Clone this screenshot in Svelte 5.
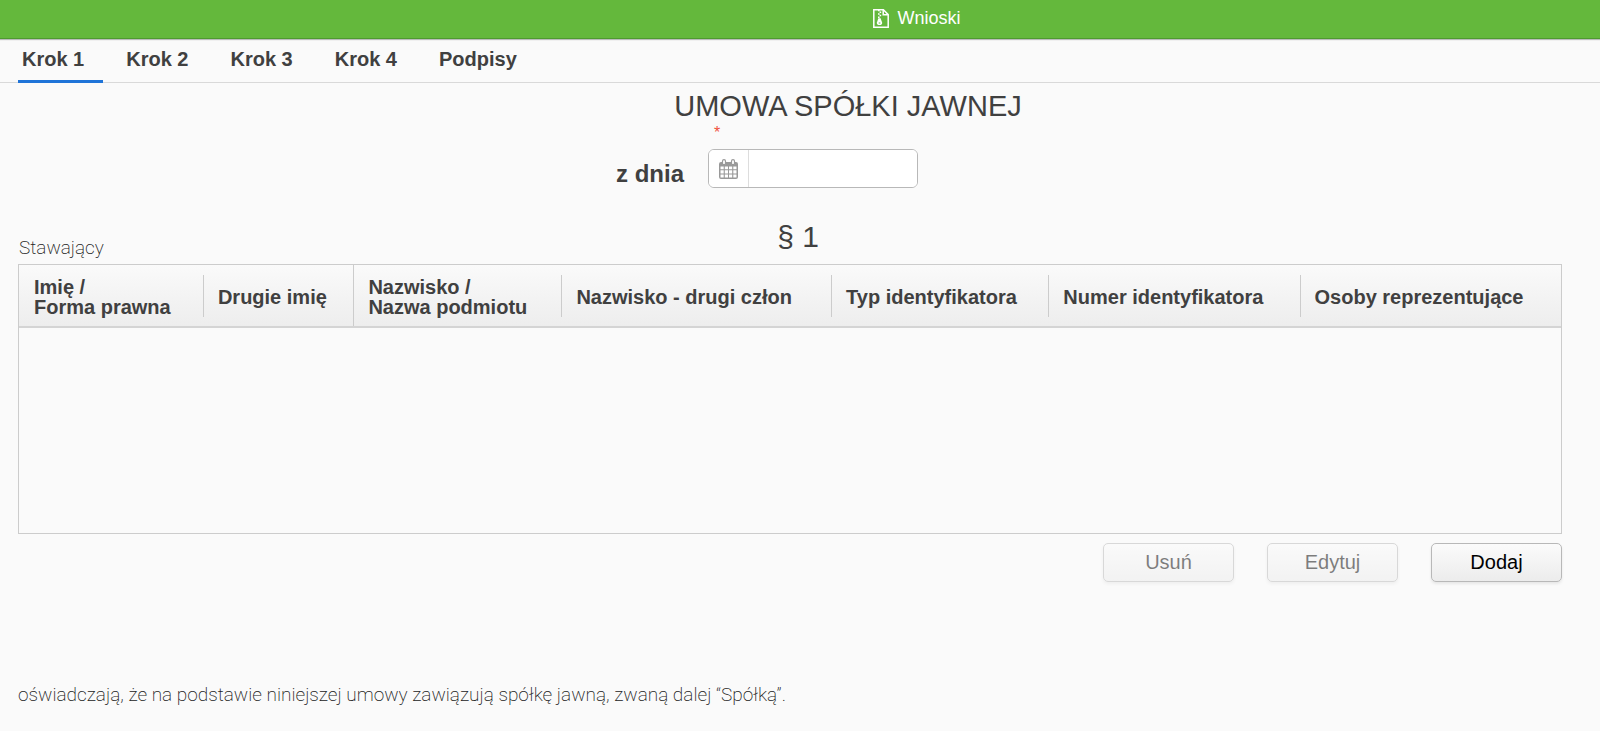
<script>
  let activeTab = $state('Krok 1');
  let date = $state('');

  const tabs = ['Krok 1', 'Krok 2', 'Krok 3', 'Krok 4', 'Podpisy'];

  const columns = [
    { key: 'first', lines: ['Imię /', 'Forma prawna'], width: 12 },
    { key: 'second', lines: ['Drugie imię'], width: 9.7, group: true },
    { key: 'last', lines: ['Nazwisko /', 'Nazwa podmiotu'], width: 13.5 },
    { key: 'last2', lines: ['Nazwisko - drugi człon'], width: 17.5 },
    { key: 'idType', lines: ['Typ identyfikatora'], width: 14.1 },
    { key: 'idNumber', lines: ['Numer identyfikatora'], width: 16.3 },
    { key: 'agents', lines: ['Osoby reprezentujące'], width: 16.9 }
  ];
</script>

<header class="topbar">
  <a class="brand" href="#wnioski">
    <svg width="16" height="19" viewBox="0 0 16 19" fill="none" stroke="currentColor" stroke-width="1.5">
      <path d="M.8.8H10.4L15.2 5.6V18.2H.8Z" />
      <path d="M10.2 1V5.8H15" />
      <path d="M5 1.5h1.6M6.6 3.2h1.6M5 4.9h1.6M6.6 6.6h1.6M5 8.3h1.6" />
      <path d="M5.4 9.2h2.2l1.6 4.6a2.6 2.2 0 1 1-5.4 0Z" fill="currentColor" stroke="none" />
      <path d="M5.7 14h1.6" stroke="#62b63c" stroke-width="1" />
    </svg>
    <span>Wnioski</span>
  </a>
</header>

<nav class="tabs">
  {#each tabs as tab}
    <button class="tab" class:active={tab === activeTab} onclick={() => (activeTab = tab)}>{tab}</button>
  {/each}
</nav>

<main>
  <h1>UMOWA SPÓŁKI JAWNEJ</h1>

  <div class="date-row">
    <label for="date">z dnia</label>
    <div class="date-field">
      <span class="required">*</span>
      <div class="date-box">
        <button class="date-button" aria-label="Kalendarz">
          <svg width="19" height="20" viewBox="0 0 19 20">
            <path fill="#999" fill-rule="evenodd" d="M2 3H17Q19 3 19 5V18Q19 20 17 20H2Q0 20 0 18V5Q0 3 2 3ZM1.5 7.5V10.2H4.7V7.5ZM5.8 7.5V10.2H9V7.5ZM10 7.5V10.2H13.2V7.5ZM14.3 7.5V10.2H17.5V7.5ZM1.5 11.3V14.4H4.7V11.3ZM5.8 11.3V14.4H9V11.3ZM10 11.3V14.4H13.2V11.3ZM14.3 11.3V14.4H17.5V11.3ZM1.5 15.5V18.6H4.7V15.5ZM5.8 15.5V18.6H9V15.5ZM10 15.5V18.6H13.2V15.5ZM14.3 15.5V18.6H17.5V15.5Z" />
            <rect x="3.5" y=".7" width="3" height="5" rx="1.5" fill="#fff" stroke="#999" stroke-width="1.2" />
            <rect x="12.5" y=".7" width="3" height="5" rx="1.5" fill="#fff" stroke="#999" stroke-width="1.2" />
          </svg>
        </button>
        <input id="date" type="text" bind:value={date} />
      </div>
    </div>
  </div>

  <div class="section-head">
    <span class="caption" id="people-caption">Stawający</span>
    <h2>§ 1</h2>
  </div>

  <div class="grid-box">
    <table aria-labelledby="people-caption">
      <thead>
        <tr>
          {#each columns as col (col.key)}
            <th class:group={col.group} style="width:{col.width}%">
              <div class="cell">
                {#each col.lines as line}<span>{line}</span>{/each}
              </div>
            </th>
          {/each}
        </tr>
      </thead>
    </table>
  </div>

  <div class="actions">
    <button disabled>Usuń</button>
    <button disabled>Edytuj</button>
    <button>Dodaj</button>
  </div>

  <p class="statement">oświadczają, że na podstawie niniejszej umowy zawiązują spółkę jawną, zwaną dalej “Spółką”.</p>
</main>

<style>
  :global(body) {
    background: #fafafa;
    color: #404040;
    font-family: "Liberation Sans", Arial, sans-serif;
    font-size: 20px;
  }

  button, input { font: inherit; }

  .topbar {
    display: flex;
    justify-content: center;
    align-items: center;
    height: 39px;
    padding: 0 0 2px 234px;
    box-sizing: border-box;
    background: #64b83c;
    border-bottom: 1px solid #4f9a30;
    box-shadow: 0 1px 1px #bbb;
  }

  .brand {
    display: flex;
    align-items: center;
    gap: 8px;
    color: #fff;
    font-size: 18px;
    text-decoration: none;
  }

  .tabs {
    display: flex;
    gap: 19px;
    height: 43px;
    padding-left: 18px;
    border-bottom: 1px solid #d9d9d9;
  }

  .tab {
    padding: 0 19px 0 4px;
    border: 0;
    border-bottom: 3px solid transparent;
    margin-bottom: -1px;
    background: none;
    color: #404040;
    font-weight: bold;
  }

  .tab.active { border-bottom-color: #1f74d8; }

  main { padding: 0 38px 24px 18px; }

  h1, h2 {
    margin: 0;
    font-weight: normal;
    line-height: 34px;
  }

  h1 {
    padding: 6px 0 0 116px;
    font-size: 29px;
    text-align: center;
  }

  .date-row {
    display: flex;
    justify-content: center;
    align-items: flex-end;
    gap: 24px;
    padding-right: 46px;
  }

  .date-row label {
    font-size: 24px;
    font-weight: bold;
    line-height: 28px;
  }

  .date-field {
    display: flex;
    flex-direction: column;
  }

  .required {
    height: 26px;
    padding-left: 6px;
    color: #f0513c;
    font-size: 16px;
    line-height: 20px;
  }

  .date-box {
    display: flex;
    width: 210px;
    height: 39px;
    box-sizing: border-box;
    border: 1px solid #b8b8b8;
    border-radius: 6px;
    background: #fff;
    overflow: hidden;
  }

  .date-button {
    display: flex;
    align-items: center;
    justify-content: center;
    width: 40px;
    padding: 0;
    border: 0;
    border-right: 1px solid #ddd;
    background: #fff;
  }

  .date-box input {
    flex: 1;
    min-width: 0;
    border: 0;
    outline: none;
    padding: 0 8px;
  }

  .section-head {
    display: grid;
    grid-template-columns: 1fr auto 1fr;
    align-items: end;
    padding: 32px 0 10px;
  }

  .section-head h2 {
    font-size: 30px;
    padding-left: 16px;
  }

  .caption, .statement {
    font-family: Roboto, "Liberation Sans", sans-serif;
    font-size: 19px;
    font-weight: 200;
    color: #222;
    line-height: 24px;
  }

  .caption {
    margin-bottom: -6px;
    padding-left: 1px;
  }

  .grid-box {
    height: 270px;
    box-sizing: border-box;
    border: 1px solid #ccc;
  }

  table {
    width: 100%;
    table-layout: fixed;
    border-collapse: collapse;
  }

  thead {
    background: linear-gradient(#fafafa, #ededed);
  }

  tr { border-bottom: 2px solid #d4d4d4; }

  th {
    padding: 10px 0 9px;
    text-align: left;
  }

  .cell {
    display: flex;
    flex-direction: column;
    justify-content: center;
    height: 42px;
    padding: 2px 0 0 14px;
    box-sizing: border-box;
    border-right: 1px solid #ccc;
    line-height: 20px;
    white-space: nowrap;
  }

  th.group { border-right: 1px solid #ccc; }

  th:first-child .cell { padding-left: 15px; }

  th.group .cell, th:last-child .cell { border-right: 0; }

  .actions {
    display: flex;
    justify-content: flex-end;
    gap: 33px;
    padding-top: 9px;
  }

  .actions button {
    width: 131px;
    height: 39px;
    padding: 0;
    border: 1px solid #b8b8b8;
    border-radius: 5px;
    background: linear-gradient(#fbfbfb, #ececec);
    box-shadow: 0 2px 3px rgba(0, 0, 0, 0.08);
    color: #000;
  }

  .actions button:disabled { opacity: 0.5; }

  .statement { margin: 101px 0 0; }
</style>
